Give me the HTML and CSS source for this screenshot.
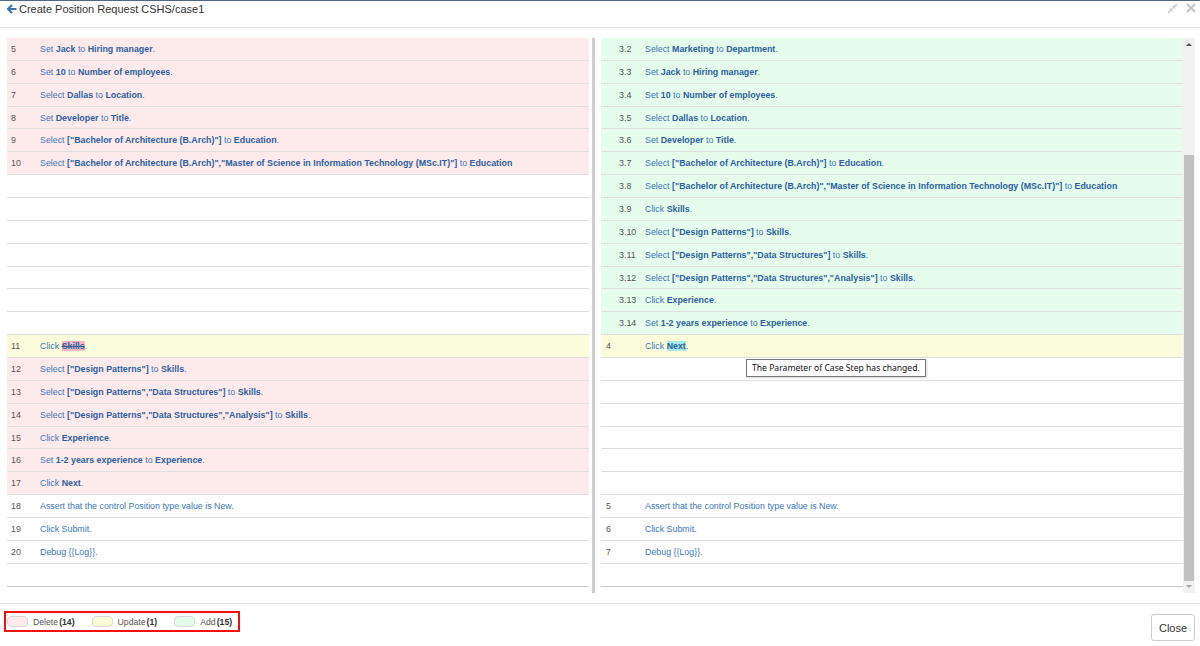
FILE: index.html
```html
<!DOCTYPE html>
<html>
<head>
<meta charset="utf-8">
<title>Create Position Request CSHS/case1</title>
<link rel="stylesheet" href="styles.css">
</head>
<body>
<div class="dialog">
  <header class="header">
    <div class="title">
      <svg class="back" width="10" height="10" viewBox="0 0 10 10"><path d="M5 1 L1 5 L5 9 M1 5 L9.5 5" fill="none" stroke="#3d72b4" stroke-width="2.2" stroke-linejoin="miter"/></svg>
      <span>Create Position Request CSHS/case1</span>
    </div>
    <div class="tools">
      <svg width="11" height="11" viewBox="0 0 11 11"><path d="M1 10 L4.5 6.5 M6.5 4.5 L10 1" stroke="#c9c9c9" stroke-width="1.6"/><path d="M2 5.5 L5.5 5.5 L5.5 9 Z M5.5 2 L5.5 5.5 L9 5.5 Z" fill="#c9c9c9"/></svg>
      <svg width="10" height="10" viewBox="0 0 10 10"><path d="M1 1 L9 9 M9 1 L1 9" stroke="#c4c4c4" stroke-width="2"/></svg>
    </div>
  </header>

  <main class="main">
    <div class="compare">
      <div class="panel left">
        <div class="row del"><span class="num">5</span><span class="txt">Set <b>Jack</b> to <b>Hiring manager</b>.</span></div>
        <div class="row del"><span class="num">6</span><span class="txt">Set <b>10</b> to <b>Number of employees</b>.</span></div>
        <div class="row del"><span class="num">7</span><span class="txt">Select <b>Dallas</b> to <b>Location</b>.</span></div>
        <div class="row del"><span class="num">8</span><span class="txt">Set <b>Developer</b> to <b>Title</b>.</span></div>
        <div class="row del"><span class="num">9</span><span class="txt">Select <b>["Bachelor of Architecture (B.Arch)"]</b> to <b>Education</b>.</span></div>
        <div class="row del"><span class="num">10</span><span class="txt">Select <b>["Bachelor of Architecture (B.Arch)","Master of Science in Information Technology (MSc.IT)"]</b> to <b>Education</b></span></div>
        <div class="row empty"></div>
        <div class="row empty"></div>
        <div class="row empty"></div>
        <div class="row empty"></div>
        <div class="row empty"></div>
        <div class="row empty"></div>
        <div class="row empty"></div>
        <div class="row upd"><span class="num">11</span><span class="txt">Click <b class="mark-del">Skills</b>.</span></div>
        <div class="row del"><span class="num">12</span><span class="txt">Select <b>["Design Patterns"]</b> to <b>Skills</b>.</span></div>
        <div class="row del"><span class="num">13</span><span class="txt">Select <b>["Design Patterns","Data Structures"]</b> to <b>Skills</b>.</span></div>
        <div class="row del"><span class="num">14</span><span class="txt">Select <b>["Design Patterns","Data Structures","Analysis"]</b> to <b>Skills</b>.</span></div>
        <div class="row del"><span class="num">15</span><span class="txt">Click <b>Experience</b>.</span></div>
        <div class="row del"><span class="num">16</span><span class="txt">Set <b>1-2 years experience</b> to <b>Experience</b>.</span></div>
        <div class="row del"><span class="num">17</span><span class="txt">Click <b>Next</b>.</span></div>
        <div class="row"><span class="num">18</span><span class="txt">Assert that the control Position type value is New.</span></div>
        <div class="row"><span class="num">19</span><span class="txt">Click Submit.</span></div>
        <div class="row"><span class="num">20</span><span class="txt">Debug {{Log}}.</span></div>
        <div class="row empty last"></div>
      </div>

      <div class="divider"></div>

      <div class="panel right">
        <div class="row add"><span class="num sub">3.2</span><span class="txt">Select <b>Marketing</b> to <b>Department</b>.</span></div>
        <div class="row add"><span class="num sub">3.3</span><span class="txt">Set <b>Jack</b> to <b>Hiring manager</b>.</span></div>
        <div class="row add"><span class="num sub">3.4</span><span class="txt">Set <b>10</b> to <b>Number of employees</b>.</span></div>
        <div class="row add"><span class="num sub">3.5</span><span class="txt">Select <b>Dallas</b> to <b>Location</b>.</span></div>
        <div class="row add"><span class="num sub">3.6</span><span class="txt">Set <b>Developer</b> to <b>Title</b>.</span></div>
        <div class="row add"><span class="num sub">3.7</span><span class="txt">Select <b>["Bachelor of Architecture (B.Arch)"]</b> to <b>Education</b>.</span></div>
        <div class="row add"><span class="num sub">3.8</span><span class="txt">Select <b>["Bachelor of Architecture (B.Arch)","Master of Science in Information Technology (MSc.IT)"]</b> to <b>Education</b></span></div>
        <div class="row add"><span class="num sub">3.9</span><span class="txt">Click <b>Skills</b>.</span></div>
        <div class="row add"><span class="num sub">3.10</span><span class="txt">Select <b>["Design Patterns"]</b> to <b>Skills</b>.</span></div>
        <div class="row add"><span class="num sub">3.11</span><span class="txt">Select <b>["Design Patterns","Data Structures"]</b> to <b>Skills</b>.</span></div>
        <div class="row add"><span class="num sub">3.12</span><span class="txt">Select <b>["Design Patterns","Data Structures","Analysis"]</b> to <b>Skills</b>.</span></div>
        <div class="row add"><span class="num sub">3.13</span><span class="txt">Click <b>Experience</b>.</span></div>
        <div class="row add"><span class="num sub">3.14</span><span class="txt">Set <b>1-2 years experience</b> to <b>Experience</b>.</span></div>
        <div class="row upd"><span class="num">4</span><span class="txt">Click <b class="mark-upd">Next</b>.</span></div>
        <div class="row empty"></div>
        <div class="row empty"></div>
        <div class="row empty"></div>
        <div class="row empty"></div>
        <div class="row empty"></div>
        <div class="row empty"></div>
        <div class="row"><span class="num">5</span><span class="txt">Assert that the control Position type value is New.</span></div>
        <div class="row"><span class="num">6</span><span class="txt">Click Submit.</span></div>
        <div class="row"><span class="num">7</span><span class="txt">Debug {{Log}}.</span></div>
        <div class="row empty last"></div>

        <div class="tooltip">The Parameter of Case Step has changed.</div>
      </div>

      <div class="scrollbar">
        <span class="arrow up"></span>
        <div class="track"><div class="thumb"></div></div>
        <span class="arrow down"></span>
      </div>
    </div>
  </main>

  <footer class="footer">
    <div class="legend">
      <span class="item"><span class="swatch s-del"></span>Delete<b>(14)</b></span>
      <span class="item"><span class="swatch s-upd"></span>Update<b>(1)</b></span>
      <span class="item"><span class="swatch s-add"></span>Add<b>(15)</b></span>
    </div>
    <button class="close">Close</button>
  </footer>
</div>
</body>
</html>
```

FILE: styles.css
```css
html, body {
  margin: 0;
  padding: 0;
  background: #fff;
}

.dialog {
  width: 1200px;
  height: 646px;
  box-sizing: border-box;
  border-top: 1px solid #4f6985;
  font-family: "Liberation Sans", Arial, sans-serif;
  overflow: hidden;
}

.header {
  height: 27px;
  box-sizing: border-box;
  border-bottom: 1px solid #e3e3e3;
  display: flex;
  justify-content: space-between;
  align-items: flex-start;
  padding: 0 4px 0 7px;
}

.title {
  display: flex;
  align-items: center;
  height: 15px;
  font-size: 11px;
  color: #333;
}

.back {
  margin: 0 2px 0 0;
}

.tools {
  display: flex;
  gap: 8px;
  padding-top: 2px;
}

.main {
  padding: 10px 5px 0 7px;
}

.compare {
  display: flex;
  height: 555px;
}

.panel {
  width: 582px;
  position: relative;
}

.divider {
  width: 3px;
  margin: 0 6px 0 3px;
  background: #cfcfcf;
}

.row {
  height: 22.86px;
  box-sizing: border-box;
  border-bottom: 1px solid #dedede;
  display: flex;
  align-items: center;
  font-size: 8.85px;
  white-space: nowrap;
}

.row.last {
  border-bottom-color: #c8c8c8;
}

.del { background: #fdebec; }
.upd { background: #fbfcdb; }
.add { background: #e6fcec; }

.num {
  color: #555;
  flex: none;
}

.left .num {
  width: 29px;
  padding-left: 4px;
}

.right .num {
  width: 39px;
  padding-left: 5px;
}

.right .num.sub {
  width: 26px;
  padding-left: 18px;
}

.txt {
  color: #4076b8;
}

.txt b {
  color: #2d5f9f;
}

.mark-del {
  background: #f7bcc3;
  text-decoration: line-through;
}

.mark-upd {
  background: #a9ece6;
}

.tooltip {
  position: absolute;
  left: 145px;
  top: 321px;
  height: 18px;
  box-sizing: border-box;
  padding: 0 5px;
  border: 1px solid #767676;
  background: #fff;
  box-shadow: 1px 1px 2px rgba(0,0,0,0.15);
  font-family: "Noto Sans", "Open Sans", sans-serif;
  font-size: 8.6px;
  line-height: 16px;
  color: #111;
  white-space: nowrap;
}

.scrollbar {
  width: 12px;
  background: #f1f1f1;
  display: flex;
  flex-direction: column;
  align-items: center;
}

.arrow {
  width: 0;
  height: 0;
  border-left: 3px solid transparent;
  border-right: 3px solid transparent;
  flex: none;
}

.arrow.up {
  margin-top: 5px;
  border-bottom: 3px solid #505050;
}

.arrow.down {
  margin: 0 0 5px;
  border-top: 3px solid #a3a3a3;
}

.track {
  flex: 1;
  width: 100%;
  display: flex;
  flex-direction: column;
  justify-content: flex-end;
  padding: 0 1px 4px;
  box-sizing: border-box;
}

.thumb {
  height: 426px;
  background: #c1c1c1;
}

.footer {
  margin-top: 10px;
  border-top: 1px solid #e5e5e5;
  display: flex;
  justify-content: space-between;
  align-items: flex-start;
  padding: 7px 5px 0 4px;
}

.legend {
  border: 2px solid #f01010;
  height: 21px;
  box-sizing: border-box;
  padding: 0 6px 0 1px;
  display: flex;
  align-items: center;
  gap: 17px;
  font-size: 8.7px;
  color: #555;
}

.item {
  display: flex;
  align-items: center;
}

.item b {
  color: #333;
  margin-left: 1px;
}

.swatch {
  width: 21px;
  height: 11px;
  box-sizing: border-box;
  border: 1px solid #d8d8d8;
  border-radius: 4px;
  margin-right: 5px;
}

.s-del { background: #fdebec; }
.s-upd { background: #fbfcd6; }
.s-add { background: #e4fbea; }

.close {
  margin-top: 3px;
  width: 44px;
  height: 27px;
  border: 1px solid #cccccc;
  border-radius: 3px;
  background: #fff;
  font-family: "Liberation Sans", Arial, sans-serif;
  font-size: 11px;
  color: #333;
  padding: 0;
}
```
